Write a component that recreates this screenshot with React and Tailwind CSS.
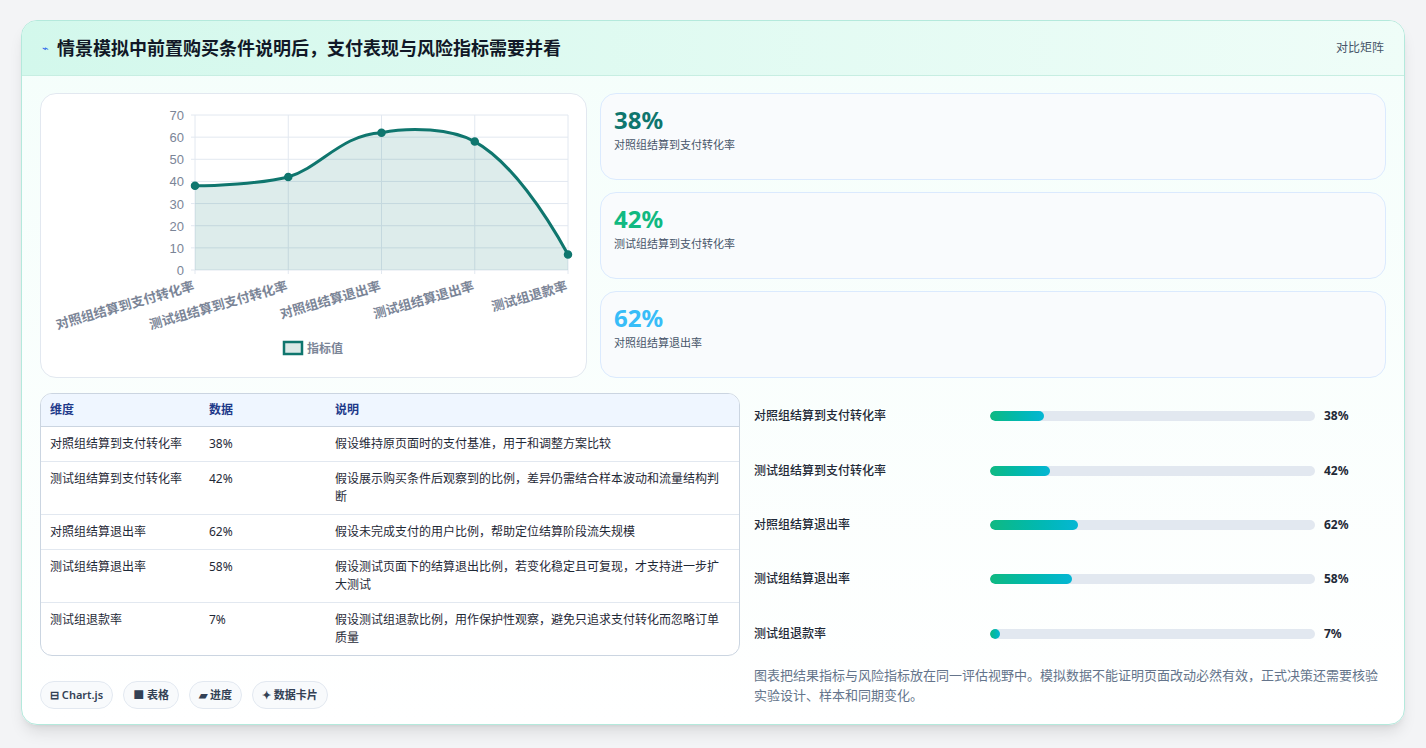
import React from "react";

const F = { fontFamily: '"Noto Sans","Noto Sans CJK SC",sans-serif' };
const rows = [
  ["对照组结算到支付转化率", "38%", "假设维持原页面时的支付基准，用于和调整方案比较", 38],
  ["测试组结算到支付转化率", "42%", "假设展示购买条件后观察到的比例，差异仍需结合样本波动和流量结构判断", 42],
  ["对照组结算退出率", "62%", "假设未完成支付的用户比例，帮助定位结算阶段流失规模", 62],
  ["测试组结算退出率", "58%", "假设测试页面下的结算退出比例，若变化稳定且可复现，才支持进一步扩大测试", 58],
  ["测试组退款率", "7%", "假设测试组退款比例，用作保护性观察，避免只追求支付转化而忽略订单质量", 7],
];
const B = 176;
const Y = (v) => B - (v * 155) / 70;
const pts = [38, 42, 62, 58, 7].map((v, i) => [154 + i * 93.25, Y(v)]);

function Chart() {
  const xs = [154, 247.25, 340.5, 433.75, 527];
  const d = `M${pts[0][0]},${pts[0][1]} C170,${pts[0][1]} 220,${pts[0][1] - 2} ${pts[1][0]},${pts[1][1]} C280,${pts[1][1] - 10} 300,${pts[2][1] + 2} ${pts[2][0]},${pts[2][1]} C370,${pts[2][1] - 6} 410,${pts[2][1] - 4} ${pts[3][0]},${pts[3][1]} C470,${pts[3][1] + 20} 505,${pts[4][1] - 40} ${pts[4][0]},${pts[4][1]}`;
  const labels = ["对照组结算到支付转化率", "测试组结算到支付转化率", "对照组结算退出率", "测试组结算退出率", "测试组退款率"];
  return (
    <svg width="546" height="284" style={F}>
      {[0, 10, 20, 30, 40, 50, 60, 70].map((v) => (
        <g key={v}>
          <line x1="150" x2="527" y1={Y(v)} y2={Y(v)} stroke="#e2e8f0" />
          <text x="143" y={Y(v) + 5} textAnchor="end" fontSize="13" fill="#7b8597" fontFamily="Liberation Sans">{v}</text>
        </g>
      ))}
      {xs.map((x) => <line key={x} x1={x} x2={x} y1={Y(70)} y2={B + 4} stroke="#e2e8f0" />)}
      <path d={`${d} L527,${B} L154,${B} Z`} fill="#0f766e" fillOpacity="0.14" />
      <path d={d} fill="none" stroke="#0f766e" strokeWidth="3" />
      {pts.map(([x, y], i) => <circle key={i} cx={x} cy={y} r="3.5" fill="#0f766e" stroke="#0f766e" strokeWidth="1.5" />)}
      {labels.map((l, i) => (
        <text key={l} x={xs[i]} y="196" textAnchor="end" fontSize="13" fontWeight="600" fill="#7b8597" transform={`rotate(-16 ${xs[i]} 196)`}>{l}</text>
      ))}
      <rect x="243" y="248" width="18" height="12" fill="#dbe9e7" stroke="#0f766e" strokeWidth="2.5" />
      <text x="266" y="259" fontSize="12" fill="#7b8597" fontWeight="600">指标值</text>
    </svg>
  );
}

export default function App() {
  return (
    <div className="w-[1426px] h-[748px] bg-[#f3f4f6] pt-[20px] pl-[21px]" style={F}>
      <div className="w-[1384px] h-[705px] rounded-2xl border border-[#b4e9dc] bg-gradient-to-b from-[#f4fefb] to-white overflow-hidden shadow-lg">
        <div className="h-[55px] flex items-center justify-between px-5 bg-gradient-to-r from-[#d3f8ec] to-[#effdf8] border-b border-[#c7eee2]">
          <div className="flex items-center gap-2">
            <span className="text-[#2563eb] text-[11px]">⌁</span>
            <span className="text-[18px] font-bold text-[#111827]">情景模拟中前置购买条件说明后，支付表现与风险指标需要并看</span>
          </div>
          <span className="text-[12px] text-[#475569]">对比矩阵</span>
        </div>
        <div className="px-[18px] pt-[17px] flex gap-[13px]">
          <div className="w-[547px] h-[285px] rounded-2xl border border-[#e2e8f0] bg-white"><Chart /></div>
          <div className="flex-1 flex flex-col gap-[12px]">
            {[["38%", "text-[#0f766e]"], ["42%", "text-[#10b981]"], ["62%", "text-[#38bdf8]"]].map(([v, c], i) => (
              <div key={v} className="h-[87px] rounded-2xl border border-[#dbeafe] bg-[#f9fbfd] px-[13px] pt-[10px]">
                <div className={`text-[24px] font-bold leading-[32px] ${c}`}>{v}</div>
                <div className="text-[11px] text-[#475569] mt-[1px]">{rows[i][0]}</div>
              </div>
            ))}
          </div>
        </div>
        <div className="px-[18px] pt-[15px] flex gap-[13px]">
          <div className="w-[700px]">
            <div className="rounded-xl border border-[#cbd5e1] overflow-hidden bg-white text-[12px] text-[#1f2937]">
              <div className="flex h-[33px] items-center bg-[#eff6ff] border-b border-[#cbd5e1] text-[#1e3a8a] font-semibold">
                <div className="w-[168px] pl-[9px]">维度</div><div className="w-[126px]">数据</div><div>说明</div>
              </div>
              {rows.map((r) => (
                <div key={r[0]} className="flex border-b last:border-b-0 border-[#e2e8f0] py-[8px] leading-[18px]">
                  <div className="w-[168px] pl-[9px]">{r[0]}</div><div className="w-[126px]">{r[1]}</div><div className="w-[390px]">{r[2]}</div>
                </div>
              ))}
            </div>
            <div className="flex gap-[10px] mt-[25px]">
              {["⊟ Chart.js", "■ 表格", "▰ 进度", "✦ 数据卡片"].map((t) => (
                <span key={t} className="h-[28px] px-[9px] flex items-center rounded-full border border-[#e2e8f0] bg-[#f8fafc] text-[11px] font-semibold text-[#334155]">{t}</span>
              ))}
            </div>
          </div>
          <div className="flex-1 pl-[1px] -mt-[4px]">
            {rows.map((r) => (
              <div key={r[0]} className="h-[54.4px] flex items-center text-[12px] text-[#1f2937]">
                <div className="w-[236px] font-medium">{r[0]}</div>
                <div className="w-[325px] h-[10px] rounded-full bg-[#e2e8f0] overflow-hidden">
                  <div className="h-full rounded-full bg-gradient-to-r from-[#10b981] to-[#06b6d4]" style={{ width: Math.max(10, r[3] * 1.42) }} />
                </div>
                <div className="ml-[9px] font-bold">{r[1]}</div>
              </div>
            ))}
            <p className="mt-[4px] text-[13px] leading-[20px] text-[#64748b] w-[630px]">图表把结果指标与风险指标放在同一评估视野中。模拟数据不能证明页面改动必然有效，正式决策还需要核验实验设计、样本和同期变化。</p>
          </div>
        </div>
      </div>
    </div>
  );
}
